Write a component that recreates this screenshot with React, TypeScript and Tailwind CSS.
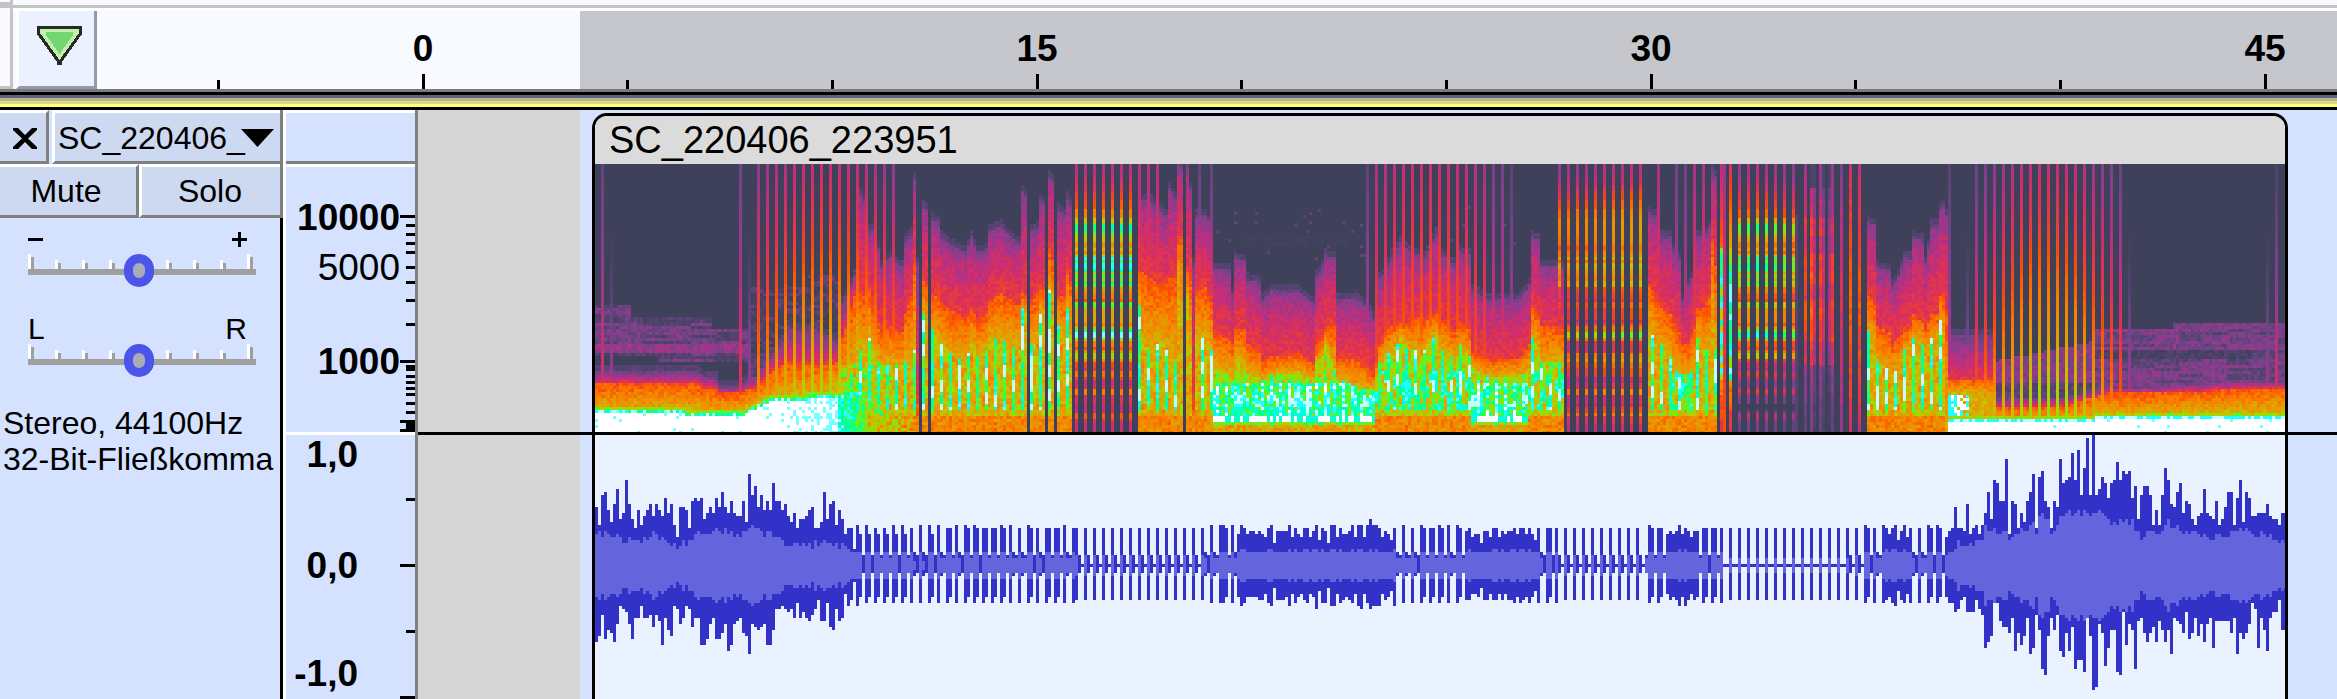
import React, { useMemo } from "react";

/* ---------- shared helpers ---------- */

const COLS = 564;
const SPEC_ROWS = 90;
const VIEW_W = 563.33;

function hash(a: number, b: number) {
  let h = (a * 374761393 + b * 668265263) | 0;
  h = Math.imul(h ^ (h >>> 13), 1274126177);
  return ((h ^ (h >>> 16)) >>> 0) / 4294967296;
}

/* ---------- spectrogram ---------- */

const STOPS: [number, number, number, number][] = [
  [0, 63, 64, 89],
  [0.1, 80, 67, 110],
  [0.2, 112, 68, 134],
  [0.28, 148, 58, 142],
  [0.35, 192, 46, 124],
  [0.42, 220, 48, 88],
  [0.48, 236, 62, 50],
  [0.53, 252, 82, 0],
  [0.6, 250, 124, 0],
  [0.68, 226, 160, 0],
  [0.75, 190, 200, 0],
  [0.81, 140, 228, 0],
  [0.85, 60, 255, 70],
  [0.89, 0, 255, 140],
  [0.93, 0, 255, 255],
  [0.97, 170, 255, 255],
  [1, 255, 255, 255],
];

function colour(v: number) {
  for (let i = 1; i < STOPS.length; i++) {
    if (v <= STOPS[i][0]) {
      const a = STOPS[i - 1];
      const b = STOPS[i];
      const t = (v - a[0]) / (b[0] - a[0]);
      const m = (k: number) => Math.round(a[k] + (b[k] - a[k]) * t);
      return `rgb(${m(1)},${m(2)},${m(3)})`;
    }
  }
  return "rgb(255,255,255)";
}

/* column, first visible row, first orange row, first green row */
const PROFILE: [number, number, number, number][] = [
  [0, 69, 73, 81], [34, 69, 73, 81], [35, 70, 74, 82], [40, 71, 75, 82], [41, 74, 76, 82],
  [48, 74, 76, 82], [50, 72, 75, 81], [54, 70, 74, 79], [56, 66, 71, 78], [60, 61, 68, 77],
  [63, 57, 66, 76], [64, 54, 66, 76], [73, 55, 67, 76], [80, 58, 66, 74], [82, 46, 58, 72],
  [85, 40, 48, 70], [87, 34, 40, 58], [88, 10, 42, 62], [89, 12, 44, 62], [91, 22, 42, 58],
  [93, 21, 50, 64], [95, 34, 55, 68], [98, 31, 54, 66], [102, 34, 56, 68], [103, 25, 50, 66],
  [105, 23, 44, 66], [106, 5, 33, 62], [107, 33, 80, 95], [109, 14, 38, 50], [110, 15, 40, 56],
  [111, 60, 90, 95], [112, 18, 44, 55], [114, 19, 43, 60], [115, 24, 46, 60], [119, 27, 49, 64],
  [123, 29, 51, 66], [125, 24, 48, 60], [127, 29, 51, 64], [130, 28, 50, 62], [131, 22, 45, 58],
  [135, 20, 43, 58], [138, 24, 45, 60], [141, 26, 47, 61], [142, 9, 43, 48], [143, 10, 44, 50],
  [145, 22, 45, 60], [147, 21, 43, 58], [148, 12, 40, 50], [149, 13, 41, 52], [151, 4, 28, 42],
  [152, 5, 32, 46], [154, 15, 44, 54], [156, 17, 44, 58], [157, 11, 36, 48], [158, 13, 40, 58],
  [181, 0, 35, 47], [182, 12, 36, 60], [185, 12, 38, 62], [188, 15, 40, 58], [190, 17, 40, 62],
  [191, 8, 38, 66], [193, 11, 38, 66], [194, 0, 24, 38], [195, 1, 24, 52], [197, 0, 36, 44],
  [198, 8, 38, 60], [199, 33, 80, 90], [200, 17, 42, 58], [203, 17, 41, 58], [205, 20, 46, 62],
  [206, 35, 56, 68], [211, 35, 58, 70], [212, 43, 60, 72], [213, 31, 54, 65], [216, 32, 55, 68],
  [217, 38, 60, 70], [221, 39, 62, 71], [222, 45, 66, 72], [225, 42, 64, 70], [234, 42, 63, 69],
  [239, 46, 66, 72], [240, 37, 60, 66], [242, 34, 58, 64], [243, 30, 54, 60], [246, 31, 54, 68],
  [247, 45, 65, 71], [253, 44, 65, 74], [257, 47, 67, 75], [259, 51, 70, 75], [261, 38, 60, 66],
  [263, 35, 56, 64], [265, 31, 54, 62], [268, 26, 52, 58], [271, 29, 53, 62], [274, 30, 51, 62],
  [275, 33, 55, 64], [277, 29, 51, 60], [280, 23, 50, 56], [282, 30, 52, 62], [286, 33, 56, 64],
  [288, 29, 53, 60], [291, 30, 55, 64], [292, 42, 63, 68], [299, 45, 65, 71], [308, 44, 64, 70],
  [311, 40, 60, 68], [312, 24, 48, 58], [314, 25, 50, 62], [315, 34, 54, 66], [321, 33, 54, 66],
  [322, 34, 55, 68], [351, 16, 40, 54], [353, 17, 43, 60], [355, 24, 48, 60], [358, 24, 50, 64],
  [359, 29, 53, 68], [361, 31, 56, 70], [362, 45, 60, 70], [364, 40, 60, 70], [366, 36, 54, 68],
  [367, 24, 48, 58], [369, 24, 48, 62], [371, 21, 44, 62], [372, 2, 26, 48], [373, 4, 34, 62],
  [424, 19, 44, 56], [426, 20, 46, 60], [427, 34, 54, 66], [431, 35, 56, 68], [432, 40, 60, 70],
  [434, 37, 58, 68], [436, 31, 55, 62], [438, 31, 54, 62], [439, 24, 50, 58], [442, 25, 52, 60],
  [443, 33, 55, 64], [445, 20, 50, 58], [447, 20, 50, 58], [448, 15, 44, 52], [449, 14, 44, 58],
  [450, 17, 50, 90], [451, 57, 72, 75], [466, 57, 71, 77], [467, 78, 81, 85], [490, 77, 80, 85],
  [504, 74, 76, 83], [520, 74, 76, 83], [540, 72, 75, 82], [563, 72, 74, 82],
];

function profileAt(c: number): [number, number, number] {
  for (let i = 1; i < PROFILE.length; i++) {
    const b = PROFILE[i];
    if (c <= b[0]) {
      const a = PROFILE[i - 1];
      const span = b[0] - a[0];
      const t = span > 20 && b[0] < 460 ? 1 : (c - a[0]) / span;
      return [a[1] + (b[1] - a[1]) * t, a[2] + (b[2] - a[2]) * t, a[3] + (b[3] - a[3]) * t];
    }
  }
  return [72, 75, 82];
}

/* tone stacks heard between the spoken parts: [first row, value] */
const TONES_STRONG: [number, number][] = [
  [0, 0.34], [4, 0.37], [6, 0.42], [9, 0.48], [12, 0.53], [15, 0.6], [18, 0.75], [20, 0.88],
  [23, 0.8], [24, 0.74], [26, 0.64], [28, 0.74], [29, 0.62], [30, 0.76], [31, 0.93], [32, 0.85],
  [33, 0.93], [35, 0.88], [36, 0.76], [37, 0.86], [38, 0.75], [39, 0.88], [40, 0.83], [41, 0.66],
  [43, 0.6], [45, 0.53], [46, 0.83], [48, 0.68], [53, 0.6], [54, 0.72], [55, 0.86], [56, 0.95],
  [58, 0.76], [59, 0.6], [61, 0.53], [62, 0.66], [63, 0.78], [65, 0.62], [66, 0.5], [68, 0.44],
  [69, 0.58], [71, 0.48], [72, 0.38], [74, 0.42], [75, 0.6], [77, 0.42], [80, 0.36], [83, 0.54],
  [85, 0.42], [86, 0.37],
];
const TONES_MID: [number, number][] = [
  [0, 0.32], [4, 0.36], [7, 0.43], [9, 0.48], [12, 0.53], [15, 0.6], [18, 0.64], [24, 0.62],
  [27, 0.56], [29, 0.62], [31, 0.7], [32, 0.58], [33, 0.72], [35, 0.66], [37, 0.62], [39, 0.7],
  [41, 0.52], [43, 0.49], [45, 0.43], [46, 0.54], [48, 0.48], [52, 0.38], [53, 0.5], [54, 0.6],
  [56, 0.8], [58, 0.6], [59, 0.42], [63, 0.6], [65, 0.66], [66, 0.56], [68, 0.5], [71, 0.36],
  [73, 0.44], [75, 0.62], [77, 0.4], [80, 0.37], [81, 0.5], [83, 0.6], [84, 0.44], [87, 0.36],
];

function tone(list: [number, number][], r: number) {
  let v = list[0][1];
  for (const [row, val] of list) if (r >= row) v = val;
  return v;
}

const BLACK_COLS = new Set([108, 111, 144, 150, 153, 196, 374, 377, 379]);

/* clicks over quiet parts: intensity at the top of the column */
function clickStrength(c: number) {
  if (c === 2) return 0.17;
  if (c === 48) return 0.2;
  if (c === 5 || c === 51) return -0.12;
  if (c >= 54 && c <= 99 && c % 3 === 0) return 0.24 + 0.13 * Math.sin(((c - 52) / 50) * Math.PI);
  if (c >= 260 && c <= 306 && c % 3 === 2) {
    return c <= 296 ? 0.29 + 0.09 * Math.sin(((c - 258) / 40) * Math.PI) : c < 304 ? 0.22 : 0.13;
  }
  if (c === 257 || c === 181 || c === 184 || c === 187) return c === 257 ? 0.15 : 0.33;
  if (c === 201 || c === 205) return 0.17;
  if (c === 354 || c === 366 || c === 369) return 0.3;
  if (c === 360 || c === 363) return 0.2;
  if (c === 451) return 0.13;
  if (c >= 460 && c <= 508 && c % 3 === 1) return 0.12 + 0.25 * Math.sin(((c - 456) / 56) * Math.PI);
  if (c === 457 || c === 511 || c === 557) return -0.15;
  if (c === 560) return 0.08;
  return 0;
}

function value(c: number, r: number) {
  const n = hash(c, r);
  const n2 = hash(c * 3 + 11, r >> 1);
  /* slow vertical runs give each syllable its dashes */
  const dash = hash(c * 7 + 5, Math.floor((r + (c % 5)) / 4));

  if (c >= 159 && c <= 180) return c % 3 === 1 && c >= 160 ? tone(TONES_STRONG, r) + (c > 170 ? 0.01 : 0) : 0;
  if (c >= 323 && c <= 350) {
    if (c % 3 !== 0) return 0;
    return tone(TONES_MID, r) + ((c - 335) / 15) * 0.05;
  }
  if (c === 321 && r < 54) return tone(TONES_MID, r) - 0.04;
  if (c >= 380 && c <= 400) {
    if (c % 3 !== 0) return c === 400 && r > 16 ? 0.12 : 0;
    const base = tone(TONES_STRONG, r) - Math.abs(c - 387) * 0.007 - 0.01;
    return r < 65 ? base : r > 79 && r < 82 ? 0.02 : base - 0.08 - (r > 75 ? 0.06 : 0);
  }
  if (c >= 401 && c <= 423) {
    const strength: Record<number, number> = {
      403: 0.06, 405: 0.1, 406: -0.04, 408: 0.06, 409: -0.04, 411: -0.09, 412: 0.04, 415: 0.02, 418: 0.16, 421: 0.14,
    };
    if (!(c in strength)) return 0;
    if ((c === 405 || c === 406 || c === 409 || c === 411) && r < 8) return 0.08;
    const body = 0.22 + 0.16 * Math.sin((r / 92) * Math.PI) + strength[c];
    const bands = c < 414 && ((r > 17 && r < 24) || (r > 29 && r < 40) || (r > 44 && r < 59)) ? 0.07 : 0;
    return body + bands + (n2 - 0.5) * 0.08 - (c < 414 && r > 66 ? 0.14 : 0);
  }
  if (BLACK_COLS.has(c)) return 0;
  if (c === 375 || c === 378) {
    if (r < 28) return c === 375 ? 0.34 + r * 0.008 : 0.42 + r * 0.01;
    return r < 72 ? 0.74 + n2 * 0.22 : 0.62 + (n - 0.5) * 0.1 - (r - 72) * 0.012;
  }
  if (c === 376 || c === 380) return 0.28 + (r / 90) * 0.25 + (n - 0.5) * 0.04;

  const [top, orange, green] = profileAt(c);
  let v = 0;
  const speech = c >= 84 && c <= 450;
  const lowQuiet = c < 84 || c > 450;

  if (r < top - 2) v = 0;
  else if (r < top) v = 0.08 + n * 0.07;
  else if (r < orange) {
    const t = (r - top) / Math.max(1, orange - top);
    v = 0.2 + 0.26 * Math.pow(t, lowQuiet ? 1 : 0.5) + (n - 0.5) * 0.1;
  } else if (r < green) {
    const t = (r - orange) / Math.max(1, green - orange);
    v = 0.53 + 0.17 * t + (n - 0.5) * 0.1;
  } else v = 0.7 + (n - 0.5) * 0.12;

  if (speech && r >= green) {
    const dense = (c >= 206 && c < 260) || (c >= 292 && c < 311);
    const medium = (c >= 260 && c < 292) || (c >= 311 && c < 323) || (c >= 358 && c < 366);
    const third = (c + (c > 205 ? (c > 290 ? 0 : 1) : 0)) % 3 === (c > 290 && c < 323 ? 0 : 1);
    if (dense) {
      if (r > 83 && r < 86) v = n2 > 0.45 ? 0.99 : 0.92;
      else if (r >= 87) v = 0.68 + (n - 0.5) * 0.16;
      else if (r >= 86) v = 0.82 + (n - 0.5) * 0.14;
      else {
        const body = r > 72 ? 0.88 : 0.77;
        v = body + (dash - 0.5) * 0.12 + (n - 0.5) * 0.12;
        if (third && r > 68) v += 0.06;
        if (r > 76 && r < 81 && dash > 0.4) v = n > 0.4 ? 0.98 : 0.94;
        if (!third && r > 80 && n > 0.5) v = 0.92;
      }
    } else if (r < 84) {
      v += (medium ? 0.06 : 0) + (n2 - 0.5) * 0.12;
      if (third) {
        v = 0.89 + (dash - 0.4) * 0.14 + (n - 0.5) * 0.05;
        if (dash > 0.7) v = 0.98;
      } else if (medium && dash > 0.6 && r > 68) v = 0.91 + (n - 0.5) * 0.08;
      if (r > 81) v = Math.min(v, 0.66 + n * 0.2);
    } else v = 0.62 + (n - 0.5) * 0.14;
  }
  if (c >= 82 && c < 107 && r > 66) v = Math.max(v, 0.75 + (n - 0.5) * 0.26 - Math.max(0, c - 95) * 0.008);

  /* loud low end */
  if (c < 90) {
    const floor = c < 30 ? 82.5 : c < 48 ? 84 : c < 58 ? 84 - (c - 48) * 0.5 : 79 - (c - 58) * 0.08;
    if (r >= floor) {
      v = c < 62 ? (n > 0.03 ? 1 : 0.95) : n > (c - 60) / 34 ? 1 : 0.95;
      if (c > 80) v = 0.94 - (c - 80) * 0.01 + (n - 0.5) * 0.1;
    } else if (r >= floor - 1) v = 0.92 + (n - 0.5) * 0.14;
    else if (r >= floor - 2) v = Math.max(v, 0.8 + (n - 0.5) * 0.12);
  }
  if (c > 450) {
    const floor = c < 500 ? 85 : 84 - (c - 500) * 0.008;
    if (c < 458 && r > 76 && r < 86 && hash(c, r + 7) > (c - 452) * 0.1) v = n > 0.5 ? 1 : 0.93;
    if (r >= floor + 1) v = n > 0.02 ? 1 : 0.95;
    else if (r >= floor) v = n > 0.5 ? 0.97 : 0.93;
    else if (r >= floor - 1) v = 0.78 + (n - 0.5) * 0.14;
  }

  /* faint haze above the quiet parts */
  if (r < top) {
    let hz = 0;
    const streak = hash(c >> 3, r * 5);
    if (c < 54 && r > 50 + (c > 38 ? 4 : 0) && r < (c > 20 ? 66 : 64)) {
      hz = r > 59 && r < 63 ? 0.27 : streak > 0.3 ? 0.21 : 0.1;
      if (r < 53 && n > 0.5) hz = 0.05;
    }
    if (c < 12 && r > 46 && r <= 51) hz = streak > 0.4 ? 0.2 : 0.09;
    if (c >= 51 && c < 82 && r > 40 + (c > 70 ? -4 : 0) && r < top) hz = hash(c >> 2, r) > 0.6 ? 0.13 : 0.02;
    if (c >= 467 && c < 500) {
      if (r > 65 - (c - 467) * 0.2 && r < 73) hz = 0.24;
      else if (r >= 73 && r < 79) hz = 0.12;
    }
    if (c >= 500 && r > 54 - (c > 525 ? 2 : 0)) {
      hz = r > 61 && r < 65 && c < 552 ? 0.07 : streak > 0.35 ? 0.23 : 0.14;
    }
    if (hz > 0) v = Math.max(v, hz + (n - 0.5) * 0.14);
    if (hz === 0 && c > 206 && c < 320 && r > 12 && r < 32 && n > 0.982) v = 0.14;
    if (hz === 0 && c > 215 && c < 252 && r > 23 && r < 27 && n > 0.55) v = 0.05;
  }

  const s = clickStrength(c);
  if (s !== 0) {
    const lift = s > 0 ? s + (r / 90) * (c > 455 || (c > 50 && c < 100) ? 0.36 + s * 0.35 : 0.28) : r > 22 ? (r - 22) * 0.006 : 0;
    v = Math.max(v, Math.min(lift, 0.86));
  }
  return Math.max(0, Math.min(1, v));
}

function Spectrogram() {
  const layers = useMemo(() => {
    const levels = 48;
    const paths: string[][] = Array.from({ length: levels + 1 }, () => []);
    for (let c = 0; c < COLS; c++) {
      let start = 0;
      let prev = -1;
      for (let r = 0; r <= SPEC_ROWS; r++) {
        const q = r < SPEC_ROWS ? Math.round(Math.max(0, Math.min(1, value(c, r))) * levels) : -2;
        if (q !== prev) {
          if (prev > 0) paths[prev].push(`M${c} ${start}h1V${r}h-1z`);
          start = r;
          prev = q;
        }
      }
    }
    return paths.map((p, i) => ({ d: p.join(""), fill: colour(i / levels) }));
  }, []);

  return (
    <svg
      className="block h-[268px] w-full bg-[#3f4059]"
      viewBox={`0 0 ${VIEW_W} 89.33`}
      preserveAspectRatio="none"
      shapeRendering="crispEdges"
      role="img"
      aria-label="Spektrogramm"
    >
      {layers.map((l, i) => (l.d ? <path key={i} d={l.d} fill={l.fill} /> : null))}
    </svg>
  );
}

/* ---------- waveform ---------- */

const INTRO_UP = [
  19, 13, 23, 24, 18, 14, 20, 25, 15, 17, 28, 20, 15, 12, 18, 13, 16, 18, 20, 16, 20, 18, 16, 22, 17, 20, 13, 9, 19, 19,
  18, 12, 21, 22, 21, 22, 15, 17, 19, 17, 22, 19, 24, 19, 17, 21, 17, 16, 16, 21, 14, 30, 23, 26, 19, 23, 18, 21, 18, 27,
  21, 21, 18, 20, 16, 14, 17, 12, 15, 15, 16, 18, 19, 12, 12, 14, 24, 15, 20, 21, 13, 18, 15, 10, 12, 12, 5, 13,
];
const INTRO_DOWN = [
  25, 23, 16, 24, 21, 22, 25, 19, 13, 14, 15, 19, 24, 17, 17, 13, 17, 17, 16, 20, 16, 18, 26, 17, 21, 23, 13, 14, 19, 17,
  13, 14, 20, 17, 17, 26, 26, 24, 19, 17, 24, 24, 22, 19, 28, 26, 19, 18, 17, 22, 23, 29, 19, 20, 21, 20, 19, 26, 26, 21,
  14, 14, 13, 14, 15, 14, 17, 12, 17, 15, 17, 18, 16, 14, 11, 18, 18, 12, 20, 21, 14, 18, 17, 9, 13, 11, 5, 13,
];
const OUTRO_UP = [
  9, 11, 12, 19, 12, 12, 11, 20, 10, 12, 13, 10, 13, 17, 24, 15, 28, 27, 21, 21, 35, 10, 21, 20, 12, 17, 14, 21, 24, 30,
  12, 29, 31, 21, 19, 12, 21, 19, 35, 27, 28, 29, 37, 28, 38, 23, 32, 42, 23, 43, 23, 25, 29, 27, 22, 27, 28, 34, 28, 31,
  30, 31, 22, 26, 15, 23, 26, 26, 23, 13, 18, 13, 23, 32, 28, 20, 19, 24, 27, 17, 21, 20, 15, 13, 16, 17, 25, 17, 16, 15,
  21, 13, 15, 19, 24, 24, 13, 22, 28, 14, 24, 22, 16, 16, 17, 17, 17, 20, 16, 15, 15, 13, 17, 17,
];
const OUTRO_DOWN = [
  10, 12, 12, 15, 14, 11, 10, 15, 15, 15, 11, 14, 16, 27, 25, 23, 12, 12, 18, 20, 20, 22, 17, 28, 22, 26, 23, 17, 29, 27,
  16, 21, 34, 36, 23, 17, 21, 16, 28, 30, 22, 28, 20, 34, 31, 31, 35, 14, 23, 41, 40, 19, 22, 33, 27, 21, 21, 35, 36, 15,
  26, 19, 21, 34, 18, 17, 22, 25, 22, 20, 25, 18, 21, 25, 21, 29, 17, 18, 19, 22, 15, 24, 22, 17, 23, 19, 25, 19, 17, 27,
  18, 18, 18, 18, 18, 22, 17, 29, 22, 24, 22, 19, 12, 14, 27, 17, 21, 28, 17, 15, 15, 11, 21, 21,
];
const RMS: [number, number][] = [
  [0, 10], [8, 9], [14, 7], [20, 10], [27, 6], [31, 8], [36, 11], [42, 11], [48, 9], [51, 12], [58, 10], [63, 7],
  [68, 6], [73, 7], [79, 7], [84, 5], [450, 4], [454, 7], [462, 7], [463, 12], [470, 10], [476, 11], [482, 17],
  [486, 10], [488, 16], [494, 17], [500, 17], [506, 14], [512, 14], [515, 9], [519, 12], [521, 9], [524, 14],
  [530, 10], [544, 9], [550, 12], [554, 9], [557, 10], [563, 7],
];
/* stretches in which the pulses run together */
const SOLID: [number, number][] = [[214, 266], [290, 313], [357, 367], [430, 437]];
const THIN: [number, number][] = [[160, 202], [321, 349], [376, 422]];
const within = (list: [number, number][], c: number) => list.some(([a, b]) => c >= a && c <= b);

function rmsAt(c: number) {
  for (let i = 1; i < RMS.length; i++) {
    if (c <= RMS[i][0]) {
      const [x0, y0] = RMS[i - 1];
      const [x1, y1] = RMS[i];
      return y0 + ((y1 - y0) * (c - x0)) / (x1 - x0);
    }
  }
  return 7;
}

function sample(c: number): [number, number, number] {
  const n = hash(c, 501);
  if (c < INTRO_UP.length) {
    const up = INTRO_UP[c];
    return [up, INTRO_DOWN[c], Math.min(up - 1, Math.round(rmsAt(c) + (n - 0.5) * 3))];
  }
  if (c >= 450) {
    const i = Math.min(c - 450, OUTRO_UP.length - 1);
    return [OUTRO_UP[i], OUTRO_DOWN[i], Math.min(OUTRO_UP[i] - 2, Math.round(rmsAt(c) + (n - 0.5) * 3))];
  }
  const phase = c < 160 ? 0 : c < 209 ? 1 : c < 350 ? 2 : 0;
  const pos = (c - phase + 3) % 3;
  if (within(THIN, c)) {
    const quiet = c >= 376 && c < 418;
    if (pos === 0) return [12, 11, quiet ? 2 : 3];
    return [pos === 1 && !quiet ? 3 : 0, pos === 1 && !quiet ? 2 : 0, 0];
  }
  if (within(SOLID, c)) {
    const swell = Math.exp(-Math.pow((c - 258) / 3, 2)) * 3;
    if (pos === 2) {
      const up = 7 + Math.round(n * 4 + swell);
      return [up, up, 4];
    }
    const up = 10 + Math.round(n * 3 + swell);
    return [up, up + Math.round(hash(c, 9) * 2 - 1), n > 0.4 ? 5 : 4];
  }
  if (pos === 0) return [12 + Math.round(n), 12, 4];
  if (pos === 1) return n > 0.35 ? [c > 112 ? 12 : 10, 10, 4] : [4, 3, c < 112 ? 1 : 2];
  return [3, 2, n > 0.4 ? 2 : 0];
}

function Waveform() {
  const { peak, rms } = useMemo(() => {
    let peak = "";
    let rms = "";
    for (let c = 0; c < COLS; c++) {
      const [up, down, inner] = sample(c);
      peak += `M${c} ${43 - up}h1V${44 + down}h-1z`;
      if (inner > 0) rms += `M${c} ${43 - inner}h1V${44 + inner}h-1z`;
    }
    return { peak, rms };
  }, []);
  return (
    <svg
      className="block h-[264px] w-full bg-[#eaf1ff]"
      viewBox={`0 0 ${VIEW_W} 88`}
      preserveAspectRatio="none"
      shapeRendering="crispEdges"
      role="img"
      aria-label="Wellenform"
    >
      <path d={peak} fill="#3232c8" />
      <path d={rms} fill="#6464dc" />
    </svg>
  );
}

/* ---------- time ruler ---------- */

function TimeRuler() {
  return (
    <header className="flex h-[89px] bg-[#f8faff]">
      <div className="flex w-[13px] shrink-0 flex-col border-r-3 border-b-3 border-[#c4c4c4]">
        <div className="h-[8px] border-b-6 border-[#c4c4c4]" />
      </div>
      <div className="min-w-0 flex-1">
        <div className="h-[8px] border-b-3 border-[#c4c4c4]" />
        <div className="flex h-[81px] border-t-3 border-white pl-[3px]">
          <button
            type="button"
            aria-label="Abspielposition anheften"
            className="flex w-[81px] shrink-0 items-start justify-center border-r-3 border-b-3 border-l-3 border-r-[#9599ac] border-b-[#9599ac] border-l-white bg-[#ebf1ff] pt-[15px] pl-[6px]"
          >
            <svg width="45" height="39" viewBox="0 0 45 39" shapeRendering="crispEdges">
              <path d="M0 0H45V8L25 36V39H20V36L0 8Z" fill="#262b26" />
              <path d="M3 3H42V7L22.500 34L3 7Z" fill="#c0f0ac" />
              <path d="M9 6H36V9L22.500 28L9 9Z" fill="#74d670" />
            </svg>
          </button>
          <div className="flex min-w-0 flex-1 overflow-hidden bg-[linear-gradient(to_right,#f8faff_483px,#c6c7cc_483px)] pl-[19px]">
            {["0", "15", "30", "45"].map((t) => (
              <div key={t} className="flex w-[614px] shrink-0 flex-col justify-between pt-[19px]">
                <span className="text-center text-[37px] leading-[38px] font-bold">{t}</span>
                <div className="flex items-end">
                  {[9, 15, 9].map((h, i) => (
                    <div key={i} className="flex flex-1 justify-center">
                      <div className={h === 15 ? "h-[15px] w-[3px] bg-black" : "h-[9px] w-[3px] bg-black"} />
                    </div>
                  ))}
                </div>
              </div>
            ))}
          </div>
        </div>
      </div>
    </header>
  );
}

/* ---------- control panel ---------- */

function Slider({ label, left, right }: { label: string; left: React.ReactNode; right: React.ReactNode }) {
  return (
    <div className="ml-[28px] w-[228px]">
      <div className="flex h-[30px] items-center justify-between pr-[9px] text-[30px] leading-[30px]">
        {left}
        {right}
      </div>
      <div className="relative h-[33px]">
        <svg className="absolute inset-0" width="228" height="33" shapeRendering="crispEdges" aria-hidden="true">
          <rect x="0" y="15" width="228" height="6" fill="#9f9f9f" />
          {[0, 27, 54, 81, 138, 165, 192, 219].map((x) => {
            const y = x === 0 || x === 219 ? 0 : 6;
            return (
              <g key={x}>
                <rect x={x} y={y} width="3" height={15 - y} fill="#fff" />
                <rect x={x + 3} y={y + 3} width="3" height={12 - y} fill="#9f9f9f" />
              </g>
            );
          })}
        </svg>
        <input
          type="range"
          aria-label={label}
          defaultValue={50}
          className="absolute top-0 left-0 h-[33px] w-[222px] appearance-none bg-transparent [&::-webkit-slider-thumb]:h-[33px] [&::-webkit-slider-thumb]:w-[30px] [&::-webkit-slider-thumb]:appearance-none [&::-webkit-slider-thumb]:rounded-full [&::-webkit-slider-thumb]:border-9 [&::-webkit-slider-thumb]:border-solid [&::-webkit-slider-thumb]:border-[#4b55ea] [&::-webkit-slider-thumb]:bg-[#a9abb8]"
        />
      </div>
    </div>
  );
}

function ControlPanel() {
  return (
    <aside className="flex w-[283px] shrink-0 flex-col">
      <div className="flex h-[54px] border-r-3 border-[#808080]">
        <button
          type="button"
          aria-label="Spur schließen"
          className="flex w-[49px] shrink-0 items-center justify-center border-t-3 border-r-3 border-b-3 border-t-white border-r-[#808080] border-b-[#808080] bg-[#cdd9f0] pt-[3px] pl-[3px]"
        >
          <svg width="24" height="21" viewBox="0 0 24 21" aria-hidden="true">
            <path d="M0 0H5L12 7L19 0H24V2L15 10.500L24 19V21H19L12 14L5 21H0V19L9 10.500L0 2Z" />
          </svg>
        </button>
        <button
          type="button"
          className="ml-[3px] flex flex-1 items-center border-t-3 border-b-3 border-l-3 border-t-white border-b-[#808080] border-l-white bg-[#cdd9f0] pt-[1px] pl-[3px] text-[32px] leading-[36px]"
        >
          <span className="w-[183px]">SC_220406_</span>
          <svg width="33" height="18" viewBox="0 0 33 18" className="shrink-0" aria-hidden="true">
            <path d="M0 0H33L16.500 18Z" />
          </svg>
        </button>
      </div>
      <div className="flex h-[54px] border-r-3 border-[#808080] text-[32px] leading-[36px]">
        <button type="button" className="w-[139px] border-t-3 border-r-3 border-b-3 border-t-white border-r-[#808080] border-b-[#808080] bg-[#cdd9f0] pr-[4px]">
          Mute
        </button>
        <button type="button" className="flex-1 border-t-3 border-b-3 border-l-3 border-t-white border-b-[#808080] border-l-white bg-[#cdd9f0] pr-[2px]">
          Solo
        </button>
      </div>
      <div className="flex flex-1 flex-col border-r-3 border-black pt-[6px]">
        <Slider
          label="Verstärkung"
          left={<svg width="15" height="3"><path d="M0 0H15V3H0Z" /></svg>}
          right={<svg width="15" height="15" shapeRendering="crispEdges"><path d="M6 0H9V6H15V9H9V15H6V9H0V6H6Z" /></svg>}
        />
        <div className="mt-[27px]">
          <Slider label="Balance" left={<span>L</span>} right={<span>R</span>} />
        </div>
        <p className="mt-[28px] pl-[3px] text-[32px] leading-[36px] whitespace-nowrap">
          Stereo, 44100Hz
          <br />
          32-Bit-Fließkomma
        </p>
      </div>
    </aside>
  );
}

/* ---------- vertical rulers ---------- */

const FREQ_MINOR = [60, 69, 78, 87, 102, 117, 135, 159, 201, 204, 211, 217, 223, 229, 238, 247];

function VerticalRulers() {
  return (
    <div className="flex w-[135px] shrink-0 flex-col border-r-3 border-l-3 border-r-[#808080] border-l-white">
      <div className="h-[54px] border-t-3 border-b-3 border-t-white border-b-[#808080]" />
      <div className="flex h-[268px] border-t-3 border-white">
        <div className="flex flex-1 flex-col items-end pt-[31px] text-[37px] leading-[40px]">
          <span className="font-bold">10000</span>
          <span className="mt-[10px]">5000</span>
          <span className="mt-[54px] font-bold">1000</span>
        </div>
        <svg width="15" height="265" viewBox="0 3 15 265" className="shrink-0" shapeRendering="crispEdges" aria-hidden="true">
          {FREQ_MINOR.map((y) => (
            <rect key={y} x="6" y={y} width="9" height="3" />
          ))}
          <path d="M0 51h15v3h-15zM0 196h15v3h-15zM0 256h15v12h-15v-3h6v-6h-6z" />
        </svg>
      </div>
      <div className="flex h-[267px] border-t-3 border-white">
        <div className="flex flex-1 flex-col items-end pt-[1px] pr-[42px] text-[37px] leading-[38px] font-bold">
          <span>1,0</span>
          <span className="mt-[73px]">0,0</span>
          <span className="mt-[70px]">-1,0</span>
        </div>
        <svg width="15" height="264" className="shrink-0" shapeRendering="crispEdges" aria-hidden="true">
          <path d="M6 63h9v3h-9zM0 129h15v3h-15zM6 195h9v3h-9zM0 261h15v3h-15z" />
        </svg>
      </div>
    </div>
  );
}

/* ---------- page ---------- */

export default function App() {
  return (
    <main className="overflow-hidden bg-[#d5e2ff] font-['Liberation_Sans',Arial,sans-serif] text-black">
      <TimeRuler />
      <div className="h-[3px] bg-[#7b7b7b]" />
      <div className="h-[3px] bg-black" />
      <div className="h-[3px] bg-[#5c617f]" />
      <div className="h-[3px] bg-[#b5b586]" />
      <div className="h-[3px] bg-[#dad983]" />
      <div className="h-[3px] bg-[#ffff80]" />
      <div className="h-[3px] bg-black" />
      <section className="flex">
        <ControlPanel />
        <VerticalRulers />
        <div className="relative flex min-w-0 flex-1">
          <div className="w-[162px] shrink-0 bg-[#d6d6d6]" />
          <article className="mt-[3px] ml-[12px] min-w-0 flex-1 overflow-hidden rounded-t-[15px] border-3 border-b-0 border-black">
            <h2 className="h-[48px] bg-[#dbdbdb] pl-[14px] text-[38px] leading-[48px]">SC_220406_223951</h2>
            <Spectrogram />
            <div className="h-[3px] bg-black" />
            <Waveform />
          </article>
          <div className="w-[49px] shrink-0" />
          <div className="absolute inset-x-0 top-[322px] h-[3px] bg-black" />
        </div>
      </section>
    </main>
  );
}
